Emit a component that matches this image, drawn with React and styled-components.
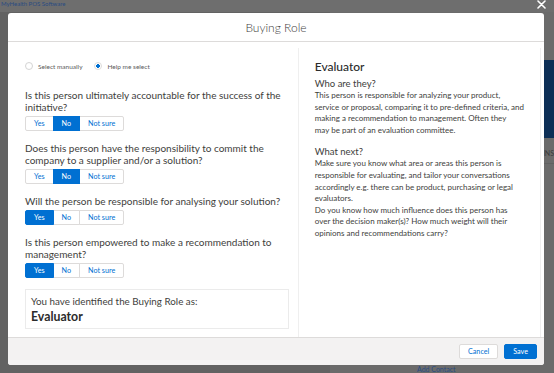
import styled, { createGlobalStyle } from "styled-components";
import { useState } from "react";

const GlobalStyle = createGlobalStyle`
  html, body {
    margin: 0;
    padding: 0;
    width: 554px;
    height: 373px;
    overflow: hidden;
    font-family: Lato, "Noto Sans", sans-serif;
  }
`;

const questions = [
  {
    id: "q1",
    text: "Is this person ultimately accountable for the success of the initiative?",
    answer: "No",
  },
  {
    id: "q2",
    text: "Does this person have the responsibility to commit the company to a supplier and/or a solution?",
    answer: "No",
  },
  {
    id: "q3",
    text: "Will the person be responsible for analysing your solution?",
    answer: "Yes",
  },
  {
    id: "q4",
    text: "Is this person empowered to make a recommendation to management?",
    answer: "Yes",
  },
];

const options = ["Yes", "No", "Not sure"];

export default function App() {
  const [mode, setMode] = useState("help");
  const [answers, setAnswers] = useState(
    Object.fromEntries(questions.map((q) => [q.id, q.answer]))
  );

  return (
    <>
      <GlobalStyle />
      <Page>
        <TopBar>MyHealth POS Software</TopBar>
        <Main>
          <LeftPane />
          <RightPane>
            <NavyCard />
            <TabLabel>INS</TabLabel>
            <Spacer />
            <AddContact>Add Contact</AddContact>
          </RightPane>
        </Main>
      </Page>

      <CloseBtn aria-label="Close">
        <svg width="9" height="9" viewBox="0 0 9 9">
          <path d="M1 1L8 8M8 1L1 8" stroke="#fff" strokeWidth="1.6" strokeLinecap="round" />
        </svg>
      </CloseBtn>

      <Modal>
        <Header>
          <Title>Buying Role</Title>
        </Header>
        <Body>
          <LeftCol>
            <RadioRow>
              <RadioLabel onClick={() => setMode("manual")}>
                <Radio checked={mode === "manual"} />
                Select manually
              </RadioLabel>
              <RadioLabel onClick={() => setMode("help")}>
                <Radio checked={mode === "help"} />
                Help me select
              </RadioLabel>
            </RadioRow>

            {questions.map((q) => (
              <Question key={q.id}>
                <QText>{q.text}</QText>
                <BtnGroup>
                  {options.map((o) => (
                    <ToggleBtn
                      key={o}
                      active={answers[q.id] === o}
                      onClick={() => setAnswers({ ...answers, [q.id]: o })}
                    >
                      {o}
                    </ToggleBtn>
                  ))}
                </BtnGroup>
              </Question>
            ))}

            <ResultBox>
              <ResultLabel>You have identified the Buying Role as:</ResultLabel>
              <ResultValue>Evaluator</ResultValue>
            </ResultBox>
          </LeftCol>

          <InfoPanel>
            <InfoTitle>Evaluator</InfoTitle>
            <InfoSub>Who are they?</InfoSub>
            <InfoText>
              This person is responsible for analyzing your product,
              <br />
              service or proposal, comparing it to pre-defined criteria, and
              <br />
              making a recommendation to management. Often they
              <br />
              may be part of an evaluation committee.
            </InfoText>
            <InfoSub spaced>What next?</InfoSub>
            <InfoText>
              Make sure you know what area or areas this person is
              <br />
              responsible for evaluating, and tailor your conversations
              <br />
              accordingly e.g. there can be product, purchasing or legal
              <br />
              evaluators.
              <br />
              Do you know how much influence does this person has
              <br />
              over the decision maker(s)? How much weight will their
              <br />
              opinions and recommendations carry?
            </InfoText>
          </InfoPanel>
        </Body>
        <Footer>
          <FooterBtn>Cancel</FooterBtn>
          <FooterBtn primary>Save</FooterBtn>
        </Footer>
      </Modal>
    </>
  );
}

const Page = styled.div`
  width: 554px;
  height: 373px;
  display: flex;
  flex-direction: column;
  background: #6b6b6b;
`;

const TopBar = styled.div`
  height: 12px;
  padding-left: 1px;
  font-size: 6px;
  line-height: 7px;
  color: #2a4c82;
  background: #6e6e6e;
`;

const Main = styled.div`
  flex: 1;
  display: flex;
`;

const LeftPane = styled.div`
  width: 330px;
  background: #626262;
`;

const RightPane = styled.div`
  flex: 1;
  display: flex;
  flex-direction: column;
  align-items: flex-end;
  padding-top: 48px;
`;

const NavyCard = styled.div`
  width: 12px;
  height: 78px;
  background: #0d2f56;
`;

const TabLabel = styled.div`
  width: 10px;
  margin-top: 11px;
  padding-bottom: 6px;
  border-bottom: 1px solid #616161;
  overflow: hidden;
  font-size: 7px;
  line-height: 8px;
  color: #3b3b3b;
  white-space: nowrap;
  direction: rtl;
`;

const Spacer = styled.div`
  flex: 1;
`;

const AddContact = styled.div`
  align-self: flex-start;
  margin-left: 87px;
  font-size: 7px;
  line-height: 8px;
  color: #2a4c82;
`;

const CloseBtn = styled.button`
  position: absolute;
  top: 0;
  left: 536px;
  width: 10px;
  height: 9px;
  padding: 0;
  border: none;
  background: transparent;
  display: flex;
  align-items: center;
  justify-content: center;
`;

const Modal = styled.div`
  position: absolute;
  top: 13px;
  left: 8px;
  width: 536px;
  height: 352px;
  display: flex;
  flex-direction: column;
  background: #fff;
  border-radius: 3px;
  overflow: hidden;
`;

const Header = styled.div`
  height: 28px;
  flex-shrink: 0;
  border-bottom: 1px solid #dddbda;
  display: flex;
  align-items: center;
  justify-content: center;
`;

const Title = styled.h2`
  margin: 0;
  font-size: 12px;
  font-weight: 300;
  color: #3e3e3c;
`;

const Body = styled.div`
  flex: 1;
  display: flex;
  min-height: 0;
`;

const LeftCol = styled.div`
  width: 268px;
  padding: 20px 9px 0 17px;
  display: flex;
  flex-direction: column;
  gap: 11px;
`;

const RadioRow = styled.div`
  display: flex;
  align-items: center;
  gap: 12px;
  height: 8px;
  margin-bottom: 8px;
`;

const RadioLabel = styled.label`
  display: flex;
  align-items: center;
  gap: 5px;
  font-size: 6.5px;
  color: #5c5c5c;
  cursor: pointer;
`;

const Radio = styled.span`
  width: 6px;
  height: 6px;
  border-radius: 50%;
  border: 1px solid ${(p) => (p.checked ? "#dddbda" : "#d4d4d4")};
  background: ${(p) =>
    p.checked ? "radial-gradient(circle, #0070d2 0 1.6px, #fff 1.9px)" : "#fff"};
`;

const Question = styled.div`
  display: flex;
  flex-direction: column;
  gap: 3px;
`;

const QText = styled.div`
  font-size: 10px;
  line-height: 12px;
  color: #3e3e3c;
`;

const BtnGroup = styled.div`
  display: flex;
`;

const ToggleBtn = styled.button`
  height: 15px;
  padding: 0 8px;
  margin-left: -1px;
  font-family: inherit;
  font-size: 7.2px;
  line-height: 13px;
  border: 1px solid ${(p) => (p.active ? "#0070d2" : "#dddbda")};
  background: ${(p) => (p.active ? "#0070d2" : "#fff")};
  color: ${(p) => (p.active ? "#fff" : "#0070d2")};
  position: relative;
  z-index: ${(p) => (p.active ? 1 : 0)};
  cursor: pointer;

  &:first-child {
    margin-left: 0;
    border-radius: 2px 0 0 2px;
  }
  &:last-child {
    border-radius: 0 2px 2px 0;
  }
`;

const ResultBox = styled.div`
  padding: 4px 5px 3px;
  border: 1px solid #ebebeb;
`;

const ResultLabel = styled.div`
  font-size: 9.8px;
  line-height: 14px;
  color: #3e3e3c;
`;

const ResultValue = styled.div`
  font-size: 12.3px;
  line-height: 17px;
  font-weight: 700;
  color: #2b2b2b;
`;

const InfoPanel = styled.div`
  flex: 1;
  margin: 6px 3px 0 0;
  padding: 11px 16px 0;
  border-left: 1px solid #efefef;
  border-right: 1px solid #efefef;
  color: #3e3e3c;
`;

const InfoTitle = styled.div`
  font-size: 12px;
  line-height: 15px;
  font-weight: 500;
  color: #2b2b2b;
`;

const InfoSub = styled.div`
  margin-top: ${(p) => (p.spaced ? "10px" : "4px")};
  font-size: 9.5px;
  line-height: 12px;
  color: #3e3e3c;
`;

const InfoText = styled.div`
  font-size: 8px;
  line-height: 11.6px;
  color: #3e3e3c;
  white-space: nowrap;
`;

const Footer = styled.div`
  height: 27px;
  flex-shrink: 0;
  border-top: 1px solid #dddbda;
  background: #f3f2f2;
  display: flex;
  align-items: center;
  justify-content: flex-end;
  gap: 6px;
  padding-right: 7px;
`;

const FooterBtn = styled.button`
  height: 15px;
  padding: 0 8px;
  font-family: inherit;
  font-size: 7.2px;
  border-radius: 2px;
  border: 1px solid ${(p) => (p.primary ? "#0070d2" : "#dddbda")};
  background: ${(p) => (p.primary ? "#0070d2" : "#fff")};
  color: ${(p) => (p.primary ? "#fff" : "#0070d2")};
  cursor: pointer;
`;
